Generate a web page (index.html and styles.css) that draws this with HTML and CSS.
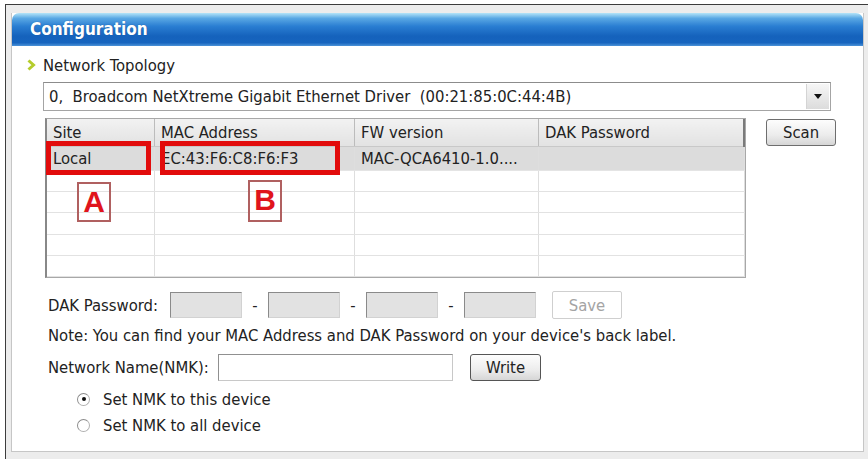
FILE: index.html
```html
<!DOCTYPE html>
<html lang="en">
<head>
    <meta charset="UTF-8">
    <title>Configuration</title>
    <link rel="stylesheet" href="styles.css">
</head>
<body>

    <div class="frame">
        <div class="panel">

            <div class="title">Configuration</div>

            <div class="content">

                <div class="section">
                    <svg class="chevron" width="9" height="12" viewBox="0 0 9 12">
                        <polyline points="1.5,1.5 6.5,6 1.5,10.5" fill="none" stroke="#b4cc2c" stroke-width="3"/>
                    </svg>
                    <span>Network Topology</span>
                </div>

                <div class="combo">
                    <span class="combo-text">0,  Broadcom NetXtreme Gigabit Ethernet Driver  (00:21:85:0C:44:4B)</span>
                    <div class="drop">
                        <svg width="8" height="5" viewBox="0 0 8 5"><polygon points="0,0 8,0 4,5" fill="#111"/></svg>
                    </div>
                </div>

                <div class="list-row">
                    <div class="list">
                        <table>
                            <thead>
                                <tr>
                                    <th class="c1">Site</th>
                                    <th class="c2">MAC Address</th>
                                    <th class="c3">FW version</th>
                                    <th class="c4">DAK Password</th>
                                </tr>
                            </thead>
                            <tbody>
                                <tr class="selected">
                                    <td>Local</td>
                                    <td>EC:43:F6:C8:F6:F3</td>
                                    <td>MAC-QCA6410-1.0....</td>
                                    <td></td>
                                </tr>
                                <tr><td></td><td></td><td></td><td></td></tr>
                                <tr><td></td><td></td><td></td><td></td></tr>
                                <tr class="tall"><td></td><td></td><td></td><td></td></tr>
                                <tr><td></td><td></td><td></td><td></td></tr>
                                <tr><td></td><td></td><td></td><td></td></tr>
                            </tbody>
                        </table>

                        <!-- annotation marks -->
                        <div class="mark mark-a"></div>
                        <div class="mark mark-b"></div>
                        <div class="tag tag-a">A</div>
                        <div class="tag tag-b">B</div>
                    </div>
                    <button class="btn scan">Scan</button>
                </div>

                <div class="field dak">
                    <span class="label dak-label">DAK Password:</span>
                    <span class="box"></span><span class="dash">-</span>
                    <span class="box"></span><span class="dash">-</span>
                    <span class="box"></span><span class="dash">-</span>
                    <span class="box"></span>
                    <button class="btn save" disabled>Save</button>
                </div>

                <div class="note">Note: You can find your MAC Address and DAK Password on your device's back label.</div>

                <div class="field nmk">
                    <span class="label nmk-label">Network Name(NMK):</span>
                    <span class="text-input"></span>
                    <button class="btn write">Write</button>
                </div>

                <div class="radio">
                    <span class="dot checked"></span>
                    <span>Set NMK to this device</span>
                </div>
                <div class="radio second">
                    <span class="dot"></span>
                    <span>Set NMK to all device</span>
                </div>

            </div>
        </div>
    </div>

</body>
</html>
```

FILE: styles.css
```css
body{
    margin: 0px;
    background: white;
    font-family: "DejaVu Sans Condensed", "DejaVu Sans", sans-serif;
    font-stretch: condensed;
    font-size: 16.5px;
    color: #222;
}

.frame{
    margin: 4px 0 0 5px;
    width: 853px;
    height: 446px;
    border: 1px solid #3c3c3c;
    border-right-width: 2px;
    border-bottom-width: 2px;
    background: #ececec;
    padding: 8px 7px 5px 5px;
}

.panel{
    height: 438px;
    background: white;
    border: 1px solid #c6c6c6;
    border-top: none;
}

.title{
    height: 33px;
    line-height: 33px;
    padding-left: 18px;
    border-radius: 7px 7px 0 0;
    background: linear-gradient(#b4e4f8 0%, #5aa8e4 16%, #2a7ed2 40%, #1562bc 70%, #1664be 90%, #4b92d8 100%);
    color: white;
    font-weight: bold;
    font-size: 17px;
    text-shadow: 0 0 1px #0b4a90;
}

.content{
    padding-left: 31px;
}

.section{
    display: flex;
    align-items: center;
    height: 20px;
    margin-top: 9px;
    margin-left: -16px;
}

.chevron{
    margin-right: 7px;
}

.combo{
    display: flex;
    align-items: center;
    justify-content: space-between;
    width: 786px;
    height: 27px;
    margin-top: 7px;
    border: 1px solid #a4a4a4;
    border-top-color: #8c8c8c;
}

.combo-text{
    white-space: pre;
    padding-left: 5px;
}

.drop{
    display: flex;
    align-items: center;
    justify-content: center;
    width: 22px;
    height: 25px;
    margin-right: 1px;
    background: linear-gradient(#f6f6f6, #dcdcdc);
    border-left: 1px solid #d4d4d4;
}

.list-row{
    display: flex;
    align-items: flex-start;
    margin-top: 7px;
    margin-left: 2px;
}

.list{
    position: relative;
    width: 698px;
    height: 158px;
    border: 1px solid #a8a8a8;
    border-left: 2px solid #888;
}

table{
    border-collapse: collapse;
    table-layout: fixed;
}

th{
    height: 27px;
    padding: 0 0 0 6px;
    text-align: left;
    font-weight: normal;
    background: linear-gradient(#f2f2f2, #e2e2e2);
    border-right: 1px solid #bcbcbc;
    border-bottom: 1px solid #c8c8c8;
}

th.c4{
    border-right: 2px solid #7a7a7a;
}

.c1{ width: 101px; }
.c2{ width: 193px; }
.c3{ width: 177px; }
.c4{ width: 198px; }

td{
    height: 20px;
    padding: 0 0 0 6px;
    border-right: 1px solid #dedede;
    border-bottom: 1px solid #e2e2e2;
    white-space: nowrap;
}

tr.selected td{
    height: 23px;
    background: #dcdcdc;
    border-bottom-color: #e4e4e4;
}

tr.tall td{
    height: 21px;
}

.mark{
    position: absolute;
    top: 22px;
    height: 24px;
    border: 5px solid #e20c0c;
}

.mark-a{
    left: -1px;
    width: 95px;
}

.mark-b{
    left: 113px;
    width: 170px;
}

.tag{
    position: absolute;
    top: 63px;
    width: 30px;
    height: 36px;
    border: 2px solid #b06060;
    color: #e0141c;
    font-family: "Liberation Sans", Arial, sans-serif;
    font-weight: bold;
    font-size: 30px;
    line-height: 36px;
    text-align: center;
}

.tag-a{ left: 30px; }
.tag-b{ left: 201px; top: 61px; height: 38px; }

.btn{
    font-family: inherit;
    font-stretch: condensed;
    font-size: 16.5px;
    color: #222;
    padding: 0;
    border: 1px solid #6e6e6e;
    border-radius: 3px;
    background: linear-gradient(#fdfdfd, #ececec 60%, #d6d6d6);
}

.scan{
    width: 70px;
    height: 27px;
    margin: 1px 0 0 20px;
}

.field{
    display: flex;
    align-items: center;
    padding-left: 5px;
}

.dak{
    margin-top: 13px;
    height: 28px;
}

.label{
    white-space: nowrap;
}

.dak-label{
    width: 122px;
}

.box{
    width: 70px;
    height: 24px;
    background: #e2e2e2;
    border: 1px solid #d2d2d2;
    border-top-color: #8a8a8a;
    border-left-color: #8a8a8a;
}

.dash{
    width: 26px;
    text-align: center;
}

.save{
    width: 70px;
    height: 28px;
    margin-left: 16px;
    color: #a4a4a4;
    background: white;
    border-color: #cfcfcf;
    border-radius: 2px;
}

.note{
    height: 20px;
    line-height: 20px;
    margin-top: 7px;
    padding-left: 5px;
}

.nmk{
    margin-top: 8px;
    height: 27px;
}

.nmk-label{
    width: 170px;
}

.text-input{
    width: 233px;
    height: 25px;
    border: 1px solid #c8c8c8;
    border-top-color: #909090;
    border-left-color: #909090;
}

.write{
    width: 71px;
    height: 27px;
    margin-left: 17px;
    border-color: #555;
}

.radio{
    display: flex;
    align-items: center;
    height: 20px;
    margin-top: 8px;
    padding-left: 34px;
}

.radio.second{
    margin-top: 6px;
}

.dot{
    display: flex;
    align-items: center;
    justify-content: center;
    width: 11px;
    height: 11px;
    margin-right: 13px;
    border: 1px solid #b0b0b0;
    border-left-color: #8c8c8c;
    border-top-color: #8c8c8c;
    border-radius: 50%;
    background: white;
}

.dot.checked::after{
    content: "";
    width: 4px;
    height: 4px;
    border-radius: 50%;
    background: #111;
}
```
